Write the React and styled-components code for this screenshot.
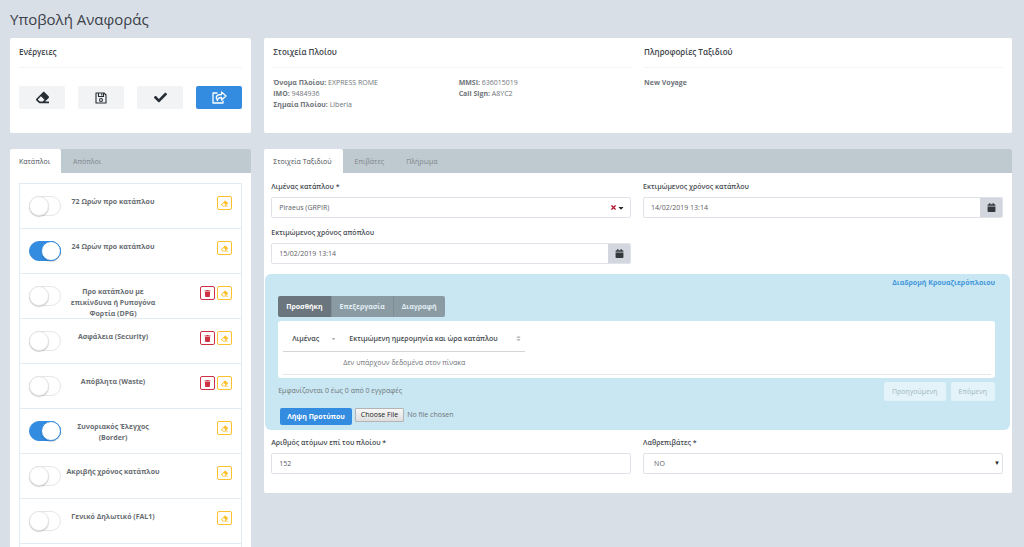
import React, { useState } from "react";
import styled, { createGlobalStyle } from "styled-components";
import { FaEraser, FaCheck, FaTrash, FaCalendar, FaTimes, FaCaretDown } from "react-icons/fa";

const Global = createGlobalStyle`
  *, *::before, *::after { box-sizing: border-box; }
  body {
    margin: 0;
    background: #d9dfe7;
    color: #6f7479;
    font: 7px/11px "Open Sans", "Noto Sans", sans-serif;
  }
  button, input, select { font: inherit; color: inherit; }
  button { cursor: pointer; }
`;

const Page = styled.main`
  height: 100vh;
  overflow: hidden;
  padding: 9px 12px 0 10px;
`;

const Title = styled.h1`
  margin: 0 0 9px;
  font-size: 15px;
  line-height: 20px;
  font-weight: 400;
  color: #3b4148;
`;

const Grid = styled.div`
  display: grid;
  grid-template-columns: minmax(0, 10fr) minmax(0, 31fr);
  gap: 16px 13px;
  align-items: start;
`;

const Card = styled.section`
  background: #fff;
  border-radius: 2px;
`;

const SummaryCard = styled(Card)`
  min-height: 95px;
  padding: 0 9px;
`;

const TwoColumns = styled.div`
  display: grid;
  grid-template-columns: repeat(2, minmax(0, 1fr));
  column-gap: 12px;
`;

const SectionTitle = styled.h2`
  margin: 0;
  height: 30px;
  padding-top: 8px;
  border-bottom: 1px solid #f2f4f5;
  font-size: 8px;
  line-height: 12px;
  font-weight: 600;
  color: #3b4148;
`;

const Actions = styled.div`
  display: grid;
  grid-template-columns: repeat(4, minmax(0, 1fr));
  gap: 13px;
  margin-top: 18px;
`;

const ActionButton = styled.button`
  display: flex;
  align-items: center;
  justify-content: center;
  height: 23px;
  padding: 0;
  border: 0;
  border-radius: 2px;
  background: ${(p) => (p.$primary ? "#338ce0" : "#f2f3f5")};
  color: ${(p) => (p.$primary ? "#fff" : "#262d34")};
  font-size: 13px;
`;

const Facts = styled.div`
  padding-top: 9px;
`;

const Fact = styled.div`
  line-height: 11px;
`;

const TabBar = styled.div`
  display: flex;
  height: 24px;
  border-radius: 2px 2px 0 0;
  background: #bfcad0;
`;

const Tab = styled.button`
  border: 0;
  padding: ${(p) => (p.$active ? "0 11px 0 9px" : "0 10px 0 12px")};
  border-radius: 2px 2px 0 0;
  background: ${(p) => (p.$active ? "#fff" : "transparent")};
  color: ${(p) => (p.$active ? "#4b5157" : "#7d868c")};
`;

const ListArea = styled.div`
  padding-top: 10px;
`;

const ReportList = styled.ul`
  list-style: none;
  margin: 0 9px;
  padding: 0 0 45px;
  border: 1px solid #e3ebf3;
`;

const ReportRow = styled.li`
  display: flex;
  align-items: flex-start;
  height: 45px;
  padding: 11px 9px 0;
  border-bottom: 1px solid #e3ebf3;
`;

const Switch = styled.input`
  appearance: none;
  flex: none;
  width: 32px;
  height: 20px;
  margin: 1px 0 0;
  border: 1px solid #e6e6e6;
  border-radius: 10px;
  background: #fff;
  display: flex;
  cursor: pointer;
  &::before {
    content: "";
    width: 20px;
    height: 20px;
    margin: -1px;
    border-radius: 50%;
    border: 1px solid #e4e4e4;
    background: #fff;
    box-shadow: 0 1px 1px rgba(0, 0, 0, 0.2);
  }
  &:checked {
    justify-content: flex-end;
    background: #338ce0;
    border-color: #338ce0;
  }
  &:checked::before { border-color: #338ce0; }
`;

const ReportName = styled.label`
  flex: none;
  width: 100px;
  margin: 0 2px;
  padding-top: 1px;
  text-align: center;
  font-weight: 700;
  color: #686d72;
`;

const RowTools = styled.div`
  display: flex;
  gap: 2px;
  margin-left: auto;
  padding-top: 1px;
`;

const ToolButton = styled.button`
  display: flex;
  align-items: center;
  justify-content: center;
  width: 15px;
  height: 14px;
  padding: 0;
  border: 1px solid;
  border-radius: 2px;
  background: #fff;
  font-size: 7px;
  color: ${(p) => (p.$danger ? "#cf3144" : "#fdc02f")};
`;

const Form = styled.form`
  padding: 8px 9px 19px 7px;
`;

const FormRow = styled(TwoColumns)`
  & + & { margin-top: 9px; }
`;

const Label = styled.label`
  display: block;
  margin-bottom: 4px;
  line-height: 12px;
  font-weight: 600;
  color: #474c52;
`;

const Group = styled.div`
  display: flex;
  height: 21px;
  border: 1px solid #dfe2e8;
  border-radius: 2px;
  background: #fff;
  overflow: hidden;
`;

const Input = styled.input`
  flex: 1;
  min-width: 0;
  width: 100%;
  border: 0;
  padding: 0 7px;
  background: transparent;
  color: #5b6066;
  outline: 0;
`;

const CalendarButton = styled.button`
  display: flex;
  align-items: center;
  justify-content: center;
  width: 22px;
  padding: 0;
  border: 0;
  background: #d3d6de;
  color: #34393e;
  font-size: 9px;
`;

const ClearButton = styled.button`
  display: flex;
  align-items: center;
  padding: 0 5px 0 0;
  border: 0;
  background: none;
  color: #b3122d;
  font-size: 7px;
  svg + svg { color: #23282d; font-size: 8px; }
`;

const SelectBox = styled.div`
  position: relative;
  &::after {
    content: "▼";
    position: absolute;
    right: 3px;
    top: 5px;
    font-size: 6px;
    color: #23282d;
    pointer-events: none;
  }
`;

const Select = styled.select`
  display: block;
  appearance: none;
  width: 100%;
  height: 21px;
  padding: 0 10px;
  border: 1px solid #dfe2e8;
  border-radius: 2px;
  background: #fff;
  color: #5b6066;
`;

const Cruise = styled.section`
  margin: 10px -7px 7px -6px;
  padding: 3px 15px 5px 13px;
  border-radius: 6px;
  background: #c8e7f2;
`;

const CruiseTitle = styled.a`
  display: block;
  text-align: right;
  line-height: 12px;
  font-weight: 700;
  color: #4497dc;
  text-decoration: none;
`;

const ButtonGroup = styled.div`
  display: flex;
  width: fit-content;
  margin: 7px 0 4px;
  border-radius: 2px;
  overflow: hidden;
`;

const GroupButton = styled.button`
  height: 21px;
  padding: 0 8px;
  border: 0;
  background: ${(p) => (p.$active ? "#6b757d" : "#8b9ba4")};
  color: ${(p) => (p.$active ? "#fff" : "#e2eef3")};
  font-weight: 700;
  & + & { border-left: 1px solid #7e8e97; }
`;

const TablePanel = styled.div`
  height: 57px;
  padding: 5px 4px 3px 5px;
  border-radius: 3px;
  background: #fff;
`;

const TableScroll = styled.div`
  height: 49px;
  border-bottom: 1px solid #e6e6e6;
`;

const Table = styled.table`
  border-collapse: collapse;
  width: 242px;
`;

const Th = styled.th`
  height: 25px;
  padding: 0 0 0 9px;
  text-align: left;
  white-space: nowrap;
  font-weight: 600;
  color: #44494e;
  border-bottom: 1px solid #d2d4d6;
  &:first-child { width: 57px; }
`;

const HeadCell = styled.span`
  display: flex;
  align-items: center;
  justify-content: space-between;
  padding-right: 4px;
`;

const Td = styled.td`
  height: 23px;
  padding: 0;
  text-align: center;
`;

const TableFooter = styled.div`
  display: flex;
  justify-content: space-between;
  margin-top: 4px;
  line-height: 18px;
`;

const Pager = styled.nav`
  display: flex;
  gap: 5px;
`;

const PageButton = styled.button`
  height: 19px;
  padding: 0 8px;
  border: 0;
  border-radius: 2px;
  background: #e3f3f9;
  color: #a2b5bd;
`;

const FileRow = styled.div`
  display: flex;
  align-items: flex-start;
  gap: 3px;
  margin: 7px 0 0 2px;
`;

const Download = styled.button`
  height: 17px;
  padding: 0 7px;
  border: 0;
  border-radius: 2px;
  background: #338ce0;
  color: #fff;
  font-weight: 700;
`;

const FileInput = styled.input`
  height: 14px;
  line-height: 12px;
  &::file-selector-button {
    height: 14px;
    margin: 0 3px 0 0;
    padding: 0 5px;
    border: 1px solid #b4b4b4;
    border-radius: 1px;
    background: linear-gradient(#f8f8f8, #dedede);
    color: #222;
    font: inherit;
  }
`;

const FloppyIcon = () => (
  <svg width="12" height="12" viewBox="0 0 24 24" fill="none" stroke="currentColor" strokeWidth="2.2" aria-hidden="true">
    <path d="M2 2h16l4 4v16H2z" strokeLinejoin="round" />
    <path d="M7 2v7h10V2M13.500 3v4" />
    <circle cx="12" cy="16" r="3" />
  </svg>
);

const ShareIcon = () => (
  <svg width="15" height="13" viewBox="0 0 30 26" fill="none" stroke="currentColor" strokeWidth="2.600" strokeLinejoin="round" aria-hidden="true">
    <path d="M11 4H2v20h20v-5" />
    <path d="M19 2l9 8-9 8v-5c-6 0-8 2-8 6-5-7-2-12 8-12z" />
  </svg>
);

const SortIcon = ({ both }) => (
  <svg width="5" height="7" viewBox="0 0 10 14" fill={both ? "none" : "#aaa"} stroke="#aaa" strokeWidth="1.500" aria-hidden="true">
    {both && <path d="M2 5l3-3 3 3z" />}
    {both ? <path d="M2 9l3 3 3-3z" /> : <path d="M2 7h6l-3 2z" />}
  </svg>
);

const reports = [
  { name: "72 Ωρών προ κατάπλου" },
  { name: "24 Ωρών προ κατάπλου", on: true },
  { name: "Προ κατάπλου με επικίνδυνα ή Ρυπογόνα Φορτία (DPG)", removable: true },
  { name: "Ασφάλεια (Security)", removable: true },
  { name: "Απόβλητα (Waste)", removable: true },
  { name: "Συνοριακός Έλεγχος (Border)", on: true },
  { name: "Ακριβής χρόνος κατάπλου" },
  { name: "Γενικό Δηλωτικό (FAL1)" },
];

function Report({ id, name, on, removable }) {
  const [checked, setChecked] = useState(Boolean(on));
  return (
    <ReportRow>
      <Switch id={id} type="checkbox" role="switch" checked={checked} onChange={(e) => setChecked(e.target.checked)} />
      <ReportName htmlFor={id}>{name}</ReportName>
      <RowTools>
        {removable && <ToolButton type="button" $danger aria-label="Διαγραφή"><FaTrash /></ToolButton>}
        <ToolButton type="button" aria-label="Καθαρισμός"><FaEraser /></ToolButton>
      </RowTools>
    </ReportRow>
  );
}

function DateField({ id, label, value }) {
  return (
    <div>
      <Label htmlFor={id}>{label}</Label>
      <Group>
        <Input id={id} defaultValue={value} />
        <CalendarButton type="button" aria-label="Ημερολόγιο"><FaCalendar /></CalendarButton>
      </Group>
    </div>
  );
}

export default function App() {
  return (
    <>
      <Global />
      <Page>
        <Title>Υποβολή Αναφοράς</Title>
        <Grid>
          <SummaryCard>
            <SectionTitle>Ενέργειες</SectionTitle>
            <Actions>
              <ActionButton aria-label="Καθαρισμός"><FaEraser /></ActionButton>
              <ActionButton aria-label="Αποθήκευση"><FloppyIcon /></ActionButton>
              <ActionButton aria-label="Έλεγχος"><FaCheck /></ActionButton>
              <ActionButton $primary aria-label="Υποβολή"><ShareIcon /></ActionButton>
            </Actions>
          </SummaryCard>

          <SummaryCard>
            <TwoColumns>
              <div>
                <SectionTitle>Στοιχεία Πλοίου</SectionTitle>
                <TwoColumns>
                  <Facts>
                    <Fact><b>Όνομα Πλοίου:</b> EXPRESS ROME</Fact>
                    <Fact><b>IMO:</b> 9484936</Fact>
                    <Fact><b>Σημαία Πλοίου:</b> Liberia</Fact>
                  </Facts>
                  <Facts>
                    <Fact><b>MMSI:</b> 636015019</Fact>
                    <Fact><b>Call Sign:</b> A8YC2</Fact>
                  </Facts>
                </TwoColumns>
              </div>
              <div>
                <SectionTitle>Πληροφορίες Ταξιδιού</SectionTitle>
                <Facts><Fact><b>New Voyage</b></Fact></Facts>
              </div>
            </TwoColumns>
          </SummaryCard>

          <Card>
            <TabBar role="tablist">
              <Tab role="tab" aria-selected="true" $active>Κατάπλοι</Tab>
              <Tab role="tab" aria-selected="false">Απόπλοι</Tab>
            </TabBar>
            <ListArea>
              <ReportList>
                {reports.map((r, i) => <Report key={r.name} id={`report-${i}`} {...r} />)}
              </ReportList>
            </ListArea>
          </Card>

          <Card>
            <TabBar role="tablist">
              <Tab role="tab" aria-selected="true" $active>Στοιχεία Ταξιδιού</Tab>
              <Tab role="tab" aria-selected="false">Επιβάτες</Tab>
              <Tab role="tab" aria-selected="false">Πλήρωμα</Tab>
            </TabBar>
            <Form onSubmit={(e) => e.preventDefault()}>
              <FormRow>
                <div>
                  <Label htmlFor="port">Λιμένας κατάπλου *</Label>
                  <Group>
                    <Input id="port" defaultValue="Piraeus (GRPIR)" />
                    <ClearButton type="button" aria-label="Εκκαθάριση"><FaTimes /><FaCaretDown /></ClearButton>
                  </Group>
                </div>
                <DateField id="eta" label="Εκτιμώμενος χρόνος κατάπλου" value="14/02/2019 13:14" />
              </FormRow>
              <FormRow>
                <DateField id="etd" label="Εκτιμώμενος χρόνος απόπλου" value="15/02/2019 13:14" />
              </FormRow>

              <Cruise>
                <CruiseTitle href="#cruise">Διαδρομή Κρουαζιερόπλοιου</CruiseTitle>
                <ButtonGroup>
                  <GroupButton type="button" $active>Προσθήκη</GroupButton>
                  <GroupButton type="button">Επεξεργασία</GroupButton>
                  <GroupButton type="button">Διαγραφή</GroupButton>
                </ButtonGroup>
                <TablePanel>
                  <TableScroll>
                    <Table>
                      <thead>
                        <tr>
                          <Th><HeadCell>Λιμένας <SortIcon /></HeadCell></Th>
                          <Th><HeadCell>Εκτιμώμενη ημερομηνία και ώρα κατάπλου <SortIcon both /></HeadCell></Th>
                        </tr>
                      </thead>
                      <tbody>
                        <tr><Td colSpan={2}>Δεν υπάρχουν δεδομένα στον πίνακα</Td></tr>
                      </tbody>
                    </Table>
                  </TableScroll>
                </TablePanel>
                <TableFooter>
                  <span>Εμφανίζονται 0 έως 0 από 0 εγγραφές</span>
                  <Pager>
                    <PageButton type="button">Προηγούμενη</PageButton>
                    <PageButton type="button">Επόμενη</PageButton>
                  </Pager>
                </TableFooter>
                <FileRow>
                  <Download type="button">Λήψη Προτύπου</Download>
                  <FileInput type="file" aria-label="Αρχείο" />
                </FileRow>
              </Cruise>

              <FormRow>
                <div>
                  <Label htmlFor="persons">Αριθμός ατόμων επί του πλοίου *</Label>
                  <Group><Input id="persons" defaultValue="152" /></Group>
                </div>
                <div>
                  <Label htmlFor="stowaways">Λαθρεπιβάτες *</Label>
                  <SelectBox>
                    <Select id="stowaways" defaultValue="NO">
                      <option>NO</option>
                      <option>YES</option>
                    </Select>
                  </SelectBox>
                </div>
              </FormRow>
            </Form>
          </Card>
        </Grid>
      </Page>
    </>
  );
}
